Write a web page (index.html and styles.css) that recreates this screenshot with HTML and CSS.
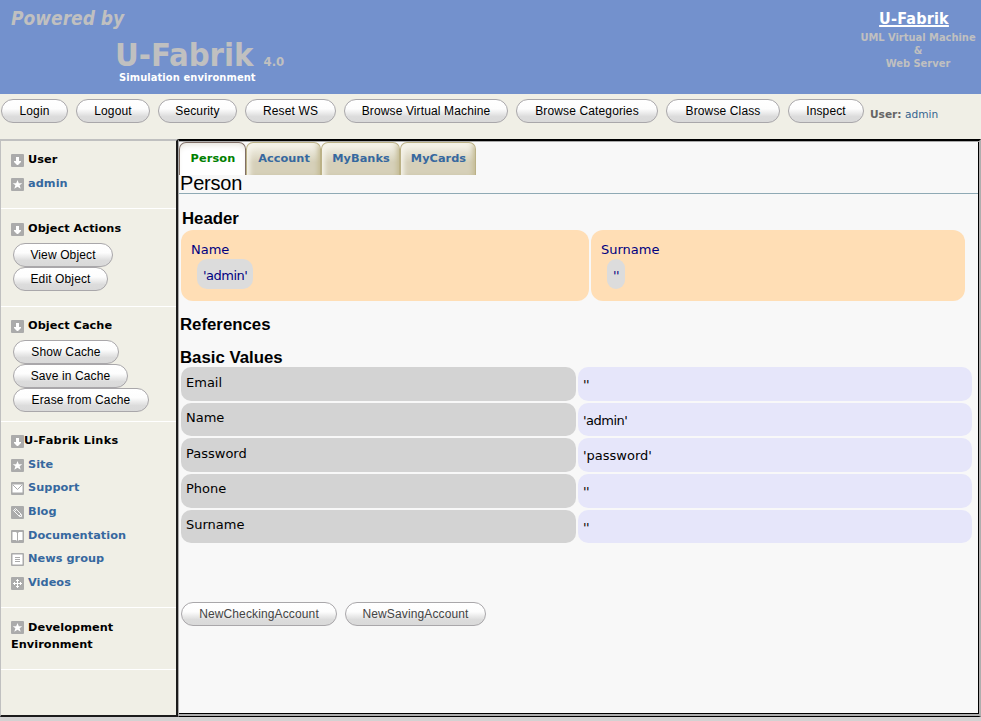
FILE: index.html
```html
<!DOCTYPE html>
<html lang="en">
<head>
<meta charset="utf-8">
<title>U-Fabrik Simulation environment</title>
<link rel="stylesheet" href="styles.css">
</head>
<body>
<svg class="defs" aria-hidden="true">
  <symbol id="box" viewBox="0 0 13 13"><rect width="13" height="13" rx="1" fill="#ababab"/></symbol>
  <symbol id="down" viewBox="0 0 13 13"><use href="#box"/><path d="M5 3h3v4h2v1L7 11H6L3 8V7h2z" fill="#fff"/></symbol>
  <symbol id="star" viewBox="0 0 13 13"><use href="#box"/><path d="M6.500 2l1.300 3.200h3.500L8.600 7.300l1.100 3.500-3.200-2-3.200 2 1.100-3.500L1.700 5.200h3.500z" fill="#fff"/></symbol>
  <symbol id="mail" viewBox="0 0 13 13"><use href="#box"/><path d="M1.500 2.500h10v8h-10z" fill="#fff"/><path d="M2 3l4.500 4.500L11 3" fill="none" stroke="#ababab"/></symbol>
  <symbol id="pen" viewBox="0 0 13 13"><use href="#box"/><path d="M2.500 4.500l2-2 6 6v2h-2zM3.500 5.500l2-2M8 10l2-2" fill="none" stroke="#fff" stroke-width=".9"/></symbol>
  <symbol id="book" viewBox="0 0 13 13"><use href="#box"/><path d="M1.500 2H5l1 1v8l-1-1H1.500zM11.500 2H8L7 3v8l1-1h3.500z" fill="#fff"/></symbol>
  <symbol id="list" viewBox="0 0 13 13"><use href="#box"/><path d="M1.500 1.500h10v10h-10z" fill="#fff"/><path d="M4 4.500h5M4 6.500h5M4 8.500h5" stroke="#ababab"/></symbol>
  <symbol id="move" viewBox="0 0 13 13"><use href="#box"/><path d="M6.500 2v9M2 6.500h9M5 3.500h3M5 9.500h3M3.500 5v3M9.500 5v3" fill="none" stroke="#fff"/></symbol>
</svg>
<header class="banner">
  <div class="brand">
    <div class="powered">Powered by</div>
    <div class="product"><span class="name">U-Fabrik</span><span class="version">4.0</span></div>
    <div class="tagline">Simulation environment</div>
  </div>
  <div class="about">
    <a class="home">U-Fabrik</a>
    <span>UML Virtual Machine</span><span>&amp;</span><span>Web Server</span>
  </div>
</header>
<nav class="toolbar">
  <button class="pill w67">Login</button>
  <button class="pill w74">Logout</button>
  <button class="pill w79">Security</button>
  <button class="pill w91">Reset WS</button>
  <button class="pill w164">Browse Virtual Machine</button>
  <button class="pill w142">Browse Categories</button>
  <button class="pill w114">Browse Class</button>
  <button class="pill w76">Inspect</button>
  <span class="user"><b>User:</b> <a>admin</a></span>
</nav>
<div class="content">
  <aside class="sidebar">
    <section class="s-user">
      <h3><svg><use href="#down"/></svg>User</h3>
      <a><svg><use href="#star"/></svg>admin</a>
    </section>
    <section class="s-actions">
      <h3><svg><use href="#down"/></svg>Object Actions</h3>
      <div class="stack"><button class="pill w100">View Object</button><button class="pill w95">Edit Object</button></div>
    </section>
    <section class="s-cache">
      <h3><svg><use href="#down"/></svg>Object Cache</h3>
      <div class="stack"><button class="pill w106">Show Cache</button><button class="pill w115">Save in Cache</button><button class="pill w136">Erase from Cache</button></div>
    </section>
    <section class="s-links">
      <h3 class="tight"><svg><use href="#down"/></svg>U-Fabrik Links</h3>
      <a><svg><use href="#star"/></svg>Site</a>
      <a><svg><use href="#mail"/></svg>Support</a>
      <a><svg><use href="#pen"/></svg>Blog</a>
      <a><svg><use href="#book"/></svg>Documentation</a>
      <a><svg><use href="#list"/></svg>News group</a>
      <a><svg><use href="#move"/></svg>Videos</a>
    </section>
    <section class="s-dev">
      <h3><svg><use href="#star"/></svg>Development</h3>
      <h3>Environment</h3>
    </section>
  </aside>
  <main class="main">
    <div class="tabs">
      <a class="tab t1 active">Person</a><a class="tab t2">Account</a><a class="tab t3">MyBanks</a><a class="tab t4">MyCards</a>
    </div>
    <h1>Person</h1>
    <h2 class="h-header">Header</h2>
    <div class="cards">
      <div class="card"><span>Name</span><span class="chip snug">'admin'</span></div>
      <div class="card"><span>Surname</span><span class="chip snug">''</span></div>
    </div>
    <h2 class="h-refs">References</h2>
    <h2 class="h-basic">Basic Values</h2>
    <div class="values">
      <div class="key">Email</div><div class="val snug">''</div>
      <div class="key">Name</div><div class="val snug">'admin'</div>
      <div class="key">Password</div><div class="val">'password'</div>
      <div class="key">Phone</div><div class="val snug">''</div>
      <div class="key">Surname</div><div class="val snug">''</div>
    </div>
    <div class="create">
      <button class="pill w156">NewCheckingAccount</button>
      <button class="pill w141">NewSavingAccount</button>
    </div>
  </main>
</div>
</body>
</html>
```
FILE: styles.css
```css
* { box-sizing: border-box; }
body { margin: 0; width: 981px; height: 721px; overflow: hidden; background: #d3d2d2; font-family: "DejaVu Sans", sans-serif; }
.defs { display: none; }
h1, h2, h3 { margin: 0; }

.banner { height: 94px; background: #7391cd; display: flex; justify-content: space-between; font-family: "DejaVu Sans Condensed", "DejaVu Sans", sans-serif; font-stretch: condensed; font-weight: bold; color: #c0c0c0; white-space: nowrap; }
.brand { padding: 7px 0 0 11px; }
.powered { font-size: 19px; line-height: 23px; font-style: italic; }
.product { margin: 8px 0 0 104px; line-height: 34px; height: 34px; }
.name { font-size: 32.5px; }
.version { font-size: 13px; margin-left: 10px; }
.tagline { margin: -1px 0 0 108px; font-size: 11px; letter-spacing: .1px; line-height: 14px; color: #fff; }
.about { width: 126px; padding-top: 9px; display: flex; flex-direction: column; align-items: center; font-size: 11px; line-height: 13px; }
.home { font-size: 16px; letter-spacing: .2px; line-height: 20px; color: #fff; text-decoration: underline; text-decoration-thickness: 2px; text-underline-offset: 1px; margin: 0 8px 2px 0; }

.toolbar { height: 45px; background: #f0efe6; display: flex; gap: 8px; padding: 5px 0 0 1px; align-items: flex-start; }
.pill { height: 24px; padding: 0; border: 1px solid #a9a7aa; border-radius: 12px; background: linear-gradient(#fff 0%, #fdfdfd 40%, #dcdcdc 75%, #d9d9d9 100%); color: #000; font: 12px/20px "Liberation Sans", Arial, sans-serif; letter-spacing: .13px; white-space: nowrap; text-align: center; }
.w67 { width: 67px; } .w74 { width: 74px; } .w79 { width: 79px; } .w91 { width: 91px; }
.w164 { width: 164px; } .w142 { width: 142px; } .w114 { width: 114px; } .w76 { width: 76px; }
.w100 { width: 100px; } .w95 { width: 95px; } .w106 { width: 106px; } .w115 { width: 115px; }
.w136 { width: 136px; } .w156 { width: 156px; } .w141 { width: 141px; }
.user { margin: 8px 0 0 -2px; font-size: 10.6px; line-height: 14px; color: #666; }
.user a { color: #36648f; }

.content { display: flex; height: 578px; }
.sidebar { width: 178px; background: #f0efe6; border: solid; border-width: 2px 2px 2px 1px; border-color: #c0c0c0 #1b1b1b #1b1b1b #c0c0c0; font-size: 11px; font-weight: bold; }
.sidebar section { border-bottom: 1px solid #fff; padding-left: 10px; }
.sidebar h3, .sidebar section > a { height: 23.65px; display: flex; align-items: center; gap: 4px; font-size: 11.3px; letter-spacing: .05px; white-space: nowrap; }
.sidebar .tight { gap: 0; letter-spacing: .25px; }
.sidebar a { color: #36689f; }
.sidebar svg { width: 13px; height: 13px; flex: none; position: relative; top: 1px; }
.s-user { height: 68px; padding-top: 7.100px; }
.s-actions { height: 98px; padding-top: 8px; }
.s-cache { height: 115px; padding-top: 7px; }
.s-links { height: 186px; padding-top: 6.900px; }
.s-dev { height: 62px; padding-top: 11px; }
.s-dev svg { margin-top: -2px; }
.sidebar .s-dev h3 { height: 17px; }
.stack { display: flex; flex-direction: column; align-items: flex-start; margin: 2.350px 0 0 2px; }

.main { width: 803px; height: 578px; background: #f8f8f8; border-top: 2px solid #000; border-right: 2px solid #b0aeae; border-bottom: 1px solid #000; border-left: 1px solid #aaa; box-shadow: inset 0 1px #aaa, inset 0 -2px #aeaeae, inset 0 -3px #000, inset -1px 0 #000; }
.tabs { display: flex; padding-top: 1px; height: 34px; }
.tab { height: 33px; border: 1px solid #bbb186; border-width: 1px 1px 0 1px; border-radius: 7px 7px 0 0; background: linear-gradient(#f7f6ee, #d6d0b9 60%); box-shadow: inset 5px 4px 5px -2px #f5f3ea, inset -4px 0 5px -2px #c3ba93; font-size: 11.3px; letter-spacing: .05px; font-weight: bold; line-height: 31px; padding-left: 1px; text-align: center; color: #36689f; }
.t1 { width: 67px; } .t2 { width: 75px; } .t3 { width: 79px; } .t4 { width: 76px; }
.tab.active { background: #fff; border-color: #806f66; color: #008000; letter-spacing: .15px; box-shadow: inset 0 5px 6px -3px #e5e2da; }
h1 { height: 19px; margin-right: 1px; padding-left: 1px; border-bottom: 1px solid #8faab5; font: 20px/17px "Liberation Sans", Arial, sans-serif; letter-spacing: -.2px; }
h2 { font: bold 16.8px/18px "Liberation Sans", Arial, sans-serif; padding-left: 1px; }
.h-header { padding-left: 3px; margin-top: 16px; }
.cards { display: grid; grid-template-columns: 408px 374px; gap: 2px; margin: 2px 0 0 2px; font-size: 13px; color: #000080; }
.card { height: 71px; border-radius: 12px; background: #ffdeb5; padding: 11px 10px 0; display: flex; flex-direction: column; align-items: flex-start; line-height: 17px; }
.chip { height: 30px; line-height: 33px; margin: 1px 0 0 6px; padding: 0 6px; border-radius: 10px; background: #dcdcdc; }
.snug { letter-spacing: -.5px; }
.h-refs { margin-top: 15px; }
.h-basic { margin-top: 15px; }
.values { display: grid; grid-template-columns: 395px 394px; grid-auto-rows: 33.65px; gap: 2px; margin: 0 0 0 2px; font-size: 13px; }
.key { border-radius: 10px; background: #d3d3d3; padding: 6.500px 5px; line-height: 17px; }
.val { border-radius: 10px; background: #e6e6fa; padding: 9px 5px; line-height: 17px; }
.create { display: flex; gap: 8px; margin: 59px 0 0 2px; }
.create .pill { color: #444; }
```
